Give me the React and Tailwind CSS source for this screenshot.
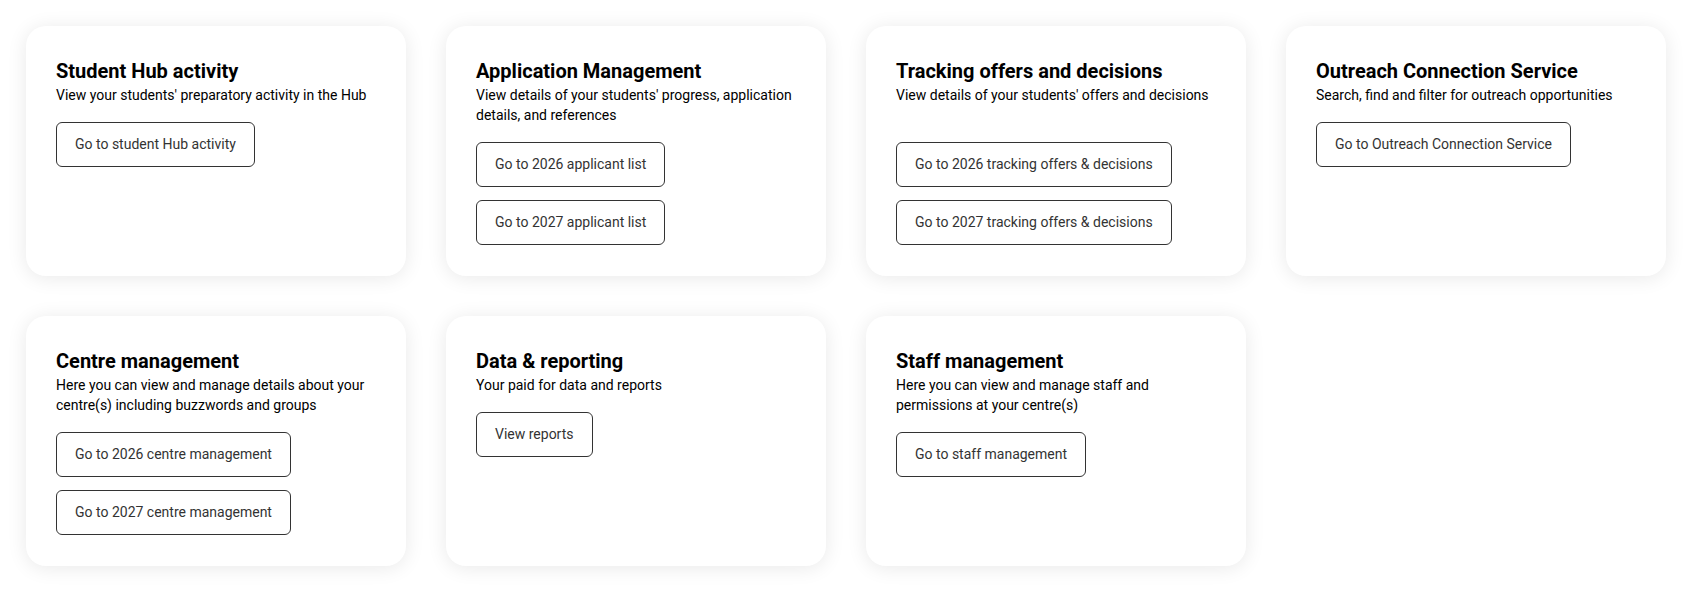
import React from "react";

const cards = [
  {
    title: "Student Hub activity",
    text: "View your students' preparatory activity in the Hub",
    links: ["Go to student Hub activity"],
  },
  {
    title: "Application Management",
    text: "View details of your students' progress, application details, and references",
    links: ["Go to 2026 applicant list", "Go to 2027 applicant list"],
  },
  {
    title: "Tracking offers and decisions",
    text: "View details of your students' offers and decisions",
    spaced: true,
    links: ["Go to 2026 tracking offers & decisions", "Go to 2027 tracking offers & decisions"],
  },
  {
    title: "Outreach Connection Service",
    text: "Search, find and filter for outreach opportunities",
    links: ["Go to Outreach Connection Service"],
  },
  {
    title: "Centre management",
    text: "Here you can view and manage details about your centre(s) including buzzwords and groups",
    links: ["Go to 2026 centre management", "Go to 2027 centre management"],
  },
  {
    title: "Data & reporting",
    text: "Your paid for data and reports",
    links: ["View reports"],
  },
  {
    title: "Staff management",
    text: "Here you can view and manage staff and permissions at your centre(s)",
    links: ["Go to staff management"],
  },
];

const Card = ({ card }) => (
  <div className="bg-white rounded-[20px] shadow-[0_2px_20px_rgba(0,0,0,0.09)] px-[30px] pt-[31px] pb-[31px]">
    <h2 className="text-[20px] leading-[28px] font-bold text-black">{card.title}</h2>
    <p className={`text-[14px] leading-[20px] text-black ${card.spaced ? "min-h-[40px]" : ""}`}>
      {card.text}
    </p>
    <div className="mt-[17px] flex flex-col items-start gap-[13px]">
      {card.links.map((label) => (
        <a
          key={label}
          href="#"
          className="h-[45px] px-[18px] flex items-center border border-[#333] rounded-[6px] text-[14px] text-[#333]"
        >
          {label}
        </a>
      ))}
    </div>
  </div>
);

export default function App() {
  return (
    <div className="min-h-screen bg-white font-['Roboto',sans-serif]">
      <div className="grid grid-cols-[repeat(4,380px)] gap-10 px-[26px] pt-[26px]">
        {cards.map((card) => (
          <Card key={card.title} card={card} />
        ))}
      </div>
    </div>
  );
}
